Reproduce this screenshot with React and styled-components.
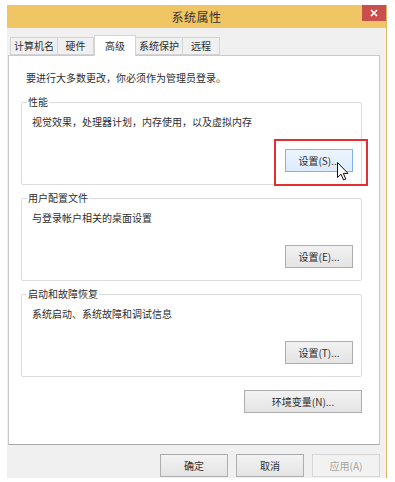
import React from 'react';
import styled, { createGlobalStyle } from 'styled-components';

const GlobalStyle = createGlobalStyle`
  body {
    margin: 0;
    background: #fff;
    font-family: "Noto Sans CJK SC", "Noto Sans", sans-serif;
    font-size: 10px;
    color: #2e2e2e;
  }
`;

const Window = styled.div`
  margin: 5px 0 0 7px;
  width: 379px;
  border-right: 1px solid #d9b85f;
  background: #f0f0f0;
  padding-bottom: 1px;
`;

const TitleBar = styled.div`
  height: 23px;
  background: #f0c564;
  display: grid;
  grid-template-columns: 1fr auto 1fr;
  align-items: center;
`;

const Title = styled.div`
  grid-column: 2;
  font-size: 12px;
  color: #333;
  letter-spacing: 0.5px;
`;

const CloseButton = styled.div`
  grid-column: 3;
  justify-self: end;
  align-self: start;
  width: 24px;
  height: 16px;
  background: #c94f4f;
  display: flex;
  align-items: center;
  justify-content: center;
`;

const TabStrip = styled.div`
  display: flex;
  align-items: flex-end;
  height: 20px;
  margin-top: 7px;
  padding-left: 3px;
`;

const Tab = styled.div`
  position: relative;
  z-index: ${(p) => (p.$active ? 1 : 0)};
  width: ${(p) => p.$w}px;
  height: ${(p) => (p.$active ? 21 : 18)}px;
  margin-bottom: ${(p) => (p.$active ? -1 : 0)}px;
  box-sizing: border-box;
  border: 1px solid #d4d4d4;
  border-bottom: ${(p) => (p.$active ? 'none' : '1px solid #d4d4d4')};
  border-left: ${(p) => (p.$first || p.$active ? '1px solid #d4d4d4' : 'none')};
  background: ${(p) => (p.$active ? '#fff' : '#f0f0f0')};
  display: flex;
  align-items: ${(p) => (p.$active ? 'flex-start' : 'center')};
  padding-top: ${(p) => (p.$active ? 3 : 0)}px;
  justify-content: center;
  line-height: 14px;
`;

const Panel = styled.div`
  margin-left: 1px;
  width: 372px;
  height: 390px;
  box-sizing: border-box;
  border: 1px solid #c9c9c9;
  border-bottom-color: #a9a9a9;
  background: #fff;
  padding: 15px 17px 0 12px;
  display: flex;
  flex-direction: column;
  line-height: 14px;
`;

const Intro = styled.div`
  padding-left: 5px;
  margin-bottom: 10px;
`;

const Group = styled.fieldset`
  margin: 0 0 6px;
  min-width: 0;
  border: 1px solid #dcdcdc;
  border-radius: 2px;
  padding: 0 8px 12px 10px;
  display: flex;
  flex-direction: column;
`;

const Legend = styled.legend`
  padding: 0 1px;
  margin-left: -5px;
  line-height: 14px;
`;

const Description = styled.div`
  margin-top: 6px;
`;

const ButtonRow = styled.div`
  display: flex;
  justify-content: flex-end;
  margin-top: ${(p) => p.$mt || 0}px;
`;

const ButtonWrap = styled.div`
  position: relative;
`;

const Button = styled.div`
  width: ${(p) => p.$w || 68}px;
  height: 23px;
  box-sizing: border-box;
  border: 1px solid ${(p) => (p.$hover ? '#7eb4ea' : p.$disabled ? '#d6d6d6' : '#adadad')};
  background: ${(p) =>
    p.$hover
      ? 'linear-gradient(#ebf4fc, #dcecfc)'
      : p.$disabled
      ? '#f2f2f2'
      : 'linear-gradient(#f2f2f2, #e4e4e4)'};
  color: ${(p) => (p.$disabled ? '#a3a3a3' : '#2e2e2e')};
  display: flex;
  align-items: center;
  justify-content: center;
  font-size: 10px;
`;

const Highlight = styled.div`
  position: absolute;
  inset: -10px -15px -14px -11px;
  border: 2px solid #e2302f;
  pointer-events: none;
`;

const Cursor = styled.svg`
  position: absolute;
  left: 52px;
  top: 13px;
`;

const Footer = styled.div`
  display: flex;
  justify-content: flex-end;
  gap: 8px;
  margin-top: 9px;
  padding-right: 6px;
`;

const tabs = [
  { label: '计算机名', w: 48 },
  { label: '硬件', w: 36 },
  { label: '高级', w: 42, active: true },
  { label: '系统保护', w: 47 },
  { label: '远程', w: 37 },
];

const groups = [
  { title: '性能', desc: '视觉效果，处理器计划，内存使用，以及虚拟内存', btn: '设置(S)...', marked: true },
  { title: '用户配置文件', desc: '与登录帐户相关的桌面设置', btn: '设置(E)...' },
  { title: '启动和故障恢复', desc: '系统启动、系统故障和调试信息', btn: '设置(T)...' },
];

export default function App() {
  return (
    <>
      <GlobalStyle />
      <Window>
        <TitleBar>
          <Title>系统属性</Title>
          <CloseButton>
            <svg width="8" height="8" viewBox="0 0 8 8">
              <path d="M1 1 L7 7 M7 1 L1 7" stroke="#fff" strokeWidth="1.6" />
            </svg>
          </CloseButton>
        </TitleBar>
        <TabStrip>
          {tabs.map((t, i) => (
            <Tab key={t.label} $w={t.w} $active={t.active} $first={i === 0}>
              {t.label}
            </Tab>
          ))}
        </TabStrip>
        <Panel>
          <Intro>要进行大多数更改，你必须作为管理员登录。</Intro>
          {groups.map((g) => (
            <Group key={g.title}>
              <Legend>{g.title}</Legend>
              <Description>{g.desc}</Description>
              <ButtonRow $mt={20}>
                <ButtonWrap>
                  <Button $hover={g.marked}>{g.btn}</Button>
                  {g.marked && (
                    <>
                      <Highlight />
                      <Cursor width="12" height="19" viewBox="0 0 12 19">
                        <path
                          d="M0.5 0.5 L0.5 15.5 L4 12.2 L6.6 18 L8.8 17 L6.3 11.4 L11 11.4 Z"
                          fill="#fff"
                          stroke="#111"
                          strokeWidth="1"
                          strokeLinejoin="round"
                        />
                      </Cursor>
                    </>
                  )}
                </ButtonWrap>
              </ButtonRow>
            </Group>
          ))}
          <ButtonRow $mt={7}>
            <Button $w={118}>环境变量(N)...</Button>
          </ButtonRow>
        </Panel>
        <Footer>
          <Button>确定</Button>
          <Button>取消</Button>
          <Button $disabled>应用(A)</Button>
        </Footer>
      </Window>
    </>
  );
}
